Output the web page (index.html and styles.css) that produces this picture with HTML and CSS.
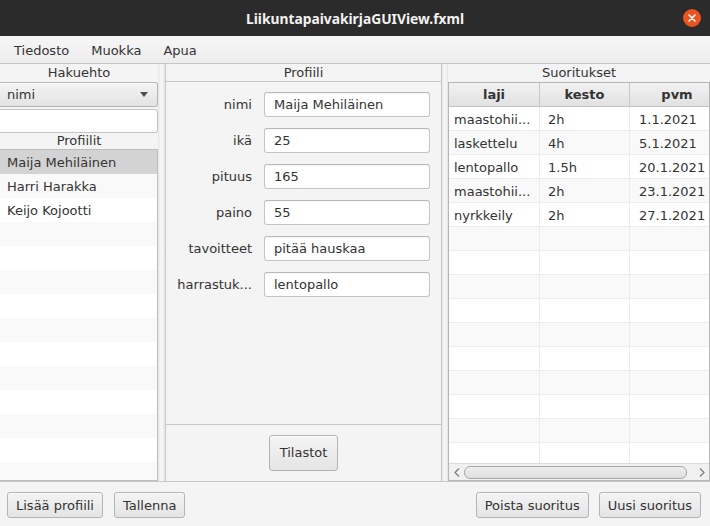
FILE: index.html
```html
<!DOCTYPE html>
<html lang="fi">
<head>
<meta charset="utf-8">
<title>LiikuntapaivakirjaGUIView.fxml</title>
<link rel="stylesheet" href="styles.css">
</head>
<body>
<div class="window">
  <header class="titlebar">
    <span class="spacer"></span>
    <span class="title">LiikuntapaivakirjaGUIView.fxml</span>
    <span class="close-wrap">
      <svg class="close" width="18" height="18" viewBox="0 0 18 18">
        <circle cx="9" cy="9" r="9" fill="#e95420"/>
        <path d="M6 6 L12 12 M12 6 L6 12" stroke="#fff" stroke-width="1.6" stroke-linecap="round"/>
      </svg>
    </span>
  </header>
  <nav class="menubar">
    <span class="menu-item">Tiedosto</span>
    <span class="menu-item">Muokka</span>
    <span class="menu-item">Apua</span>
  </nav>
  <main class="split">
    <section class="pane pane-left">
      <div class="caption">Hakuehto</div>
      <div class="combo"><span>nimi</span><span class="arrow"></span></div>
      <input class="search" type="text" value="">
      <div class="caption caption-small">Profiilit</div>
      <ul class="list">
        <li class="list-row selected">Maija Mehiläinen</li>
        <li class="list-row">Harri Harakka</li>
        <li class="list-row">Keijo Kojootti</li>
        <li class="list-row"></li><li class="list-row"></li><li class="list-row"></li>
        <li class="list-row"></li><li class="list-row"></li><li class="list-row"></li>
        <li class="list-row"></li><li class="list-row"></li><li class="list-row"></li>
        <li class="list-row"></li><li class="list-row"></li>
      </ul>
    </section>
    <div class="divider"></div>
    <section class="pane pane-middle">
      <div class="caption caption-lined">Profiili</div>
      <div class="form">
        <div class="form-row"><span class="form-label">nimi</span><input class="field" type="text" value="Maija Mehiläinen"></div>
        <div class="form-row"><span class="form-label">ikä</span><input class="field" type="text" value="25"></div>
        <div class="form-row"><span class="form-label">pituus</span><input class="field" type="text" value="165"></div>
        <div class="form-row"><span class="form-label">paino</span><input class="field" type="text" value="55"></div>
        <div class="form-row"><span class="form-label">tavoitteet</span><input class="field" type="text" value="pitää hauskaa"></div>
        <div class="form-row"><span class="form-label">harrastuk...</span><input class="field" type="text" value="lentopallo"></div>
      </div>
      <div class="actions"><button class="btn btn-tall">Tilastot</button></div>
    </section>
    <div class="divider divider-narrow"></div>
    <section class="pane pane-right">
      <div class="caption">Suoritukset</div>
      <div class="table">
        <div class="thead">
          <div class="th col-laji">laji</div>
          <div class="th col-kesto">kesto</div>
          <div class="th col-pvm">pvm</div>
        </div>
        <div class="tbody">
          <div class="tr"><div class="td col-laji">maastohii...</div><div class="td col-kesto">2h</div><div class="td col-pvm">1.1.2021</div></div>
          <div class="tr"><div class="td col-laji">laskettelu</div><div class="td col-kesto">4h</div><div class="td col-pvm">5.1.2021</div></div>
          <div class="tr"><div class="td col-laji">lentopallo</div><div class="td col-kesto">1.5h</div><div class="td col-pvm">20.1.2021</div></div>
          <div class="tr"><div class="td col-laji">maastohii...</div><div class="td col-kesto">2h</div><div class="td col-pvm">23.1.2021</div></div>
          <div class="tr"><div class="td col-laji">nyrkkeily</div><div class="td col-kesto">2h</div><div class="td col-pvm">27.1.2021</div></div>
          <div class="tr"><div class="td col-laji"></div><div class="td col-kesto"></div><div class="td col-pvm"></div></div>
          <div class="tr"><div class="td col-laji"></div><div class="td col-kesto"></div><div class="td col-pvm"></div></div>
          <div class="tr"><div class="td col-laji"></div><div class="td col-kesto"></div><div class="td col-pvm"></div></div>
          <div class="tr"><div class="td col-laji"></div><div class="td col-kesto"></div><div class="td col-pvm"></div></div>
          <div class="tr"><div class="td col-laji"></div><div class="td col-kesto"></div><div class="td col-pvm"></div></div>
          <div class="tr"><div class="td col-laji"></div><div class="td col-kesto"></div><div class="td col-pvm"></div></div>
          <div class="tr"><div class="td col-laji"></div><div class="td col-kesto"></div><div class="td col-pvm"></div></div>
          <div class="tr"><div class="td col-laji"></div><div class="td col-kesto"></div><div class="td col-pvm"></div></div>
          <div class="tr"><div class="td col-laji"></div><div class="td col-kesto"></div><div class="td col-pvm"></div></div>
          <div class="tr"><div class="td col-laji"></div><div class="td col-kesto"></div><div class="td col-pvm"></div></div>
        </div>
        <div class="hscroll">
          <span class="scroll-btn"><svg width="6" height="9" viewBox="0 0 6 9"><path d="M5 0.5 L1 4.5 L5 8.5" fill="none" stroke="#7a7a7a" stroke-width="1.2"/></svg></span>
          <span class="track"><span class="thumb"></span></span>
          <span class="scroll-btn"><svg width="6" height="9" viewBox="0 0 6 9"><path d="M1 0.5 L5 4.5 L1 8.5" fill="none" stroke="#7a7a7a" stroke-width="1.2"/></svg></span>
        </div>
      </div>
    </section>
  </main>
  <footer class="bottombar">
    <div class="btn-group">
      <button class="btn">Lisää profiili</button>
      <button class="btn">Tallenna</button>
    </div>
    <div class="btn-group btn-group-right">
      <button class="btn">Poista suoritus</button>
      <button class="btn">Uusi suoritus</button>
    </div>
  </footer>
</div>
</body>
</html>
```

FILE: styles.css
```css
* { box-sizing: border-box; }

body {
  margin: 0;
  font-family: "DejaVu Sans", sans-serif;
  font-size: 13px;
  color: #333333;
  background: #f4f4f4;
}

.window {
  width: 710px;
  height: 526px;
  display: flex;
  flex-direction: column;
  overflow: hidden;
  background: #f4f4f4;
}

/* title bar */
.titlebar {
  flex: none;
  height: 36px;
  background: #2b2b2b;
  display: grid;
  grid-template-columns: 1fr auto 1fr;
  align-items: center;
}
.title {
  font-family: "Noto Sans", sans-serif;
  font-weight: 700;
  font-size: 13.8px;
  color: #f2f2f2;
  padding-top: 1px;
}
.close-wrap {
  justify-self: end;
  display: flex;
  margin-right: 9px;
}

/* menu bar */
.menubar {
  flex: none;
  height: 28px;
  display: flex;
  align-items: center;
  padding: 2px 0 0 3px;
  background: linear-gradient(to bottom, #f6f6f6, #ededed);
  border-bottom: 1px solid #c6c6c6;
}
.menu-item { padding: 0 11px; }

/* split pane */
.split {
  flex: none;
  height: 417px;
  display: flex;
}
.pane { display: flex; flex-direction: column; }
.divider {
  flex: none;
  width: 7px;
  background: linear-gradient(to right, #e6e6e6, #f8f8f8 45%, #f2f2f2 70%, #e4e4e4);
}
.divider-narrow { width: 6px; }

.caption {
  flex: none;
  height: 18px;
  line-height: 18px;
  text-align: center;
}
.caption-small { height: 16px; line-height: 16px; }

/* left pane */
.pane-left { width: 158px; }
.combo {
  flex: none;
  height: 25px;
  display: flex;
  align-items: center;
  justify-content: space-between;
  padding: 0 9px 0 7px;
  border: 1px solid #b5b5b5;
  border-left: none;
  border-radius: 0 3px 3px 0;
  background: linear-gradient(to bottom, #f3f3f3, #e3e3e3);
  box-shadow: inset 0 1px 0 #fbfbfb;
}
.arrow {
  width: 0;
  height: 0;
  border-left: 4px solid transparent;
  border-right: 4px solid transparent;
  border-top: 5px solid #4d4d4d;
}
.search {
  flex: none;
  display: block;
  width: 158px;
  height: 24px;
  margin: 2px 0 0;
  padding: 0 7px;
  font: inherit;
  color: #333;
  background: #fff;
  border: 1px solid #c4c4c4;
  border-left: none;
  border-radius: 0 3px 3px 0;
  outline: none;
}
.list {
  flex: 1;
  margin: 0;
  padding: 0;
  list-style: none;
  background: #fff;
  border: 1px solid #bdbdbd;
  border-left: none;
  overflow: hidden;
}
.list-row {
  height: 24px;
  line-height: 25px;
  padding-left: 7px;
  white-space: nowrap;
}
.list-row:nth-child(even) { background: #f9f9f9; }
.list-row.selected { background: #d3d3d3; }

/* middle pane */
.pane-middle {
  width: 277px;
  border-left: 1px solid #c8c8c8;
  border-right: 1px solid #c8c8c8;
}
.caption-lined {
  border-bottom: 1px solid #c8c8c8;
  height: 18px;
  line-height: 17px;
}
.form {
  flex: none;
  height: 343px;
  border-bottom: 1px solid #c8c8c8;
  padding: 10px 0 0 11px;
  display: flex;
  flex-direction: column;
  gap: 11px;
}
.form-row {
  display: flex;
  align-items: center;
  gap: 12px;
}
.form-label {
  width: 75px;
  text-align: right;
  white-space: nowrap;
}
.field {
  width: 166px;
  height: 25px;
  margin: 0;
  padding: 0 9px;
  font: inherit;
  color: #333;
  background: #fff;
  border: 1px solid #c4c4c4;
  border-top-color: #b8b8b8;
  border-radius: 3px;
  box-shadow: inset 0 1px 1px rgba(0, 0, 0, 0.04);
  outline: none;
}
.actions {
  flex: 1;
  display: flex;
  align-items: center;
  justify-content: center;
  padding-bottom: 1px;
}

/* buttons */
.btn {
  height: 26px;
  margin: 0;
  padding: 0 8px;
  font: inherit;
  color: #333;
  border: 1px solid #b4b4b4;
  border-radius: 3px;
  background: linear-gradient(to bottom, #f4f4f4, #e4e4e4);
  box-shadow: inset 0 1px 0 #fcfcfc;
}
.btn-tall { height: 36px; padding: 0 10px; }

/* right pane */
.pane-right { width: 262px; }
.table {
  flex: 1;
  display: flex;
  flex-direction: column;
  background: #fff;
  border: 1px solid #b5b5b5;
  overflow: hidden;
}
.thead, .tr {
  display: flex;
  flex: none;
}
.th {
  flex: none;
  height: 24px;
  line-height: 24px;
  text-align: center;
  font-weight: bold;
  background: linear-gradient(to bottom, #f2f2f2, #e1e1e1);
  border-right: 1px solid #c8c8c8;
  border-bottom: 1px solid #c3c3c3;
}
.col-laji { width: 91px; }
.col-kesto { width: 90px; }
.col-pvm { width: 95px; }
.tbody {
  flex: 1;
  overflow: hidden;
}
.tr { height: 24px; }
.tr:nth-child(even) { background: #f9f9f9; }
.td {
  flex: none;
  height: 24px;
  line-height: 25px;
  white-space: nowrap;
  overflow: hidden;
  border-right: 1px solid #ececec;
  border-bottom: 1px solid #ececec;
}
.td.col-laji { padding-left: 5px; }
.td.col-kesto { padding-left: 8px; }
.td.col-pvm { padding-left: 9px; }

.hscroll {
  flex: none;
  height: 17px;
  display: flex;
  align-items: center;
  background: #f0f0f0;
  border-top: 1px solid #dcdcdc;
}
.scroll-btn {
  flex: none;
  width: 15px;
  display: flex;
  justify-content: center;
  align-items: center;
}
.track {
  flex: 1;
  display: flex;
  align-items: center;
}
.thumb {
  width: 223px;
  height: 13px;
  border: 1px solid #a9a9a9;
  border-radius: 6px;
  background: linear-gradient(to bottom, #eeeeee, #dedede);
}

/* bottom bar */
.bottombar {
  flex: none;
  height: 45px;
  display: flex;
  justify-content: space-between;
  align-items: flex-start;
  padding: 10px 9px 0 7px;
  border-top: 1px solid #c8c8c8;
}
.btn-group {
  display: flex;
  gap: 11px;
}
.btn-group-right { gap: 10px; }
```
